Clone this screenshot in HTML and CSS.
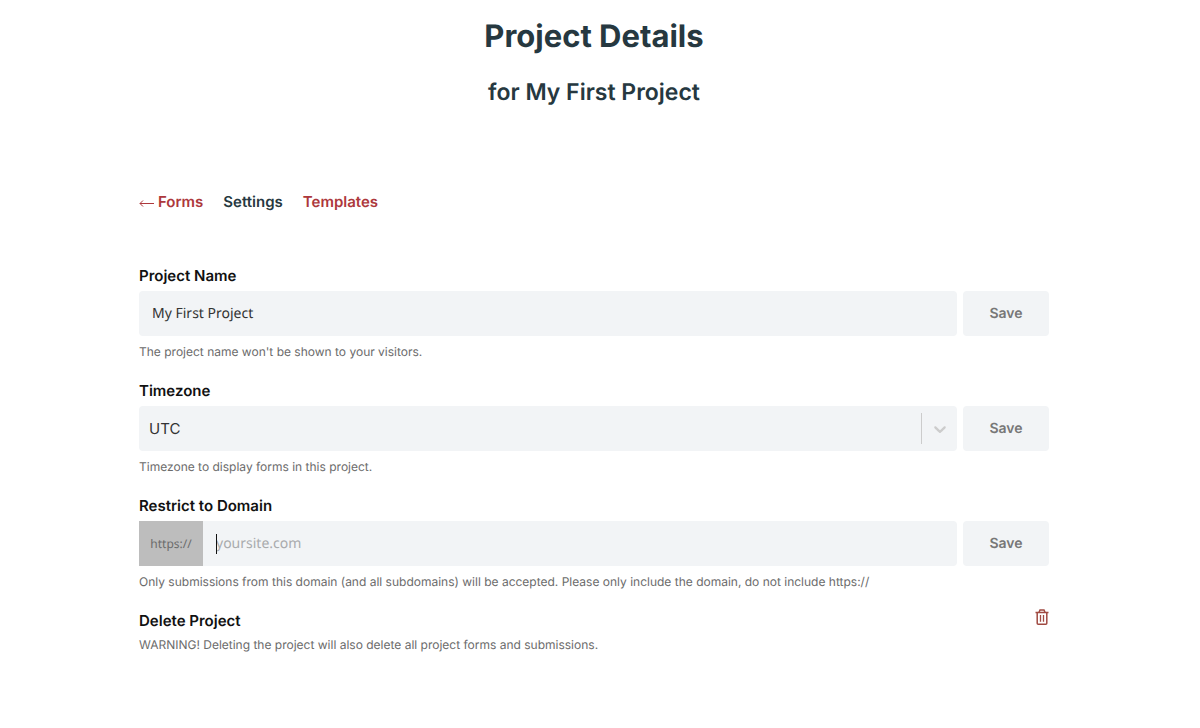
FILE: index.html
```
<!DOCTYPE html>
<html lang="en">
<head>
  <meta charset="UTF-8">
  <meta name="viewport" content="width=device-width, initial-scale=1">
  <title>Project Details</title>
  <link rel="stylesheet" href="styles.css">
</head>
<body>

  <header class="page-header">
    <h1>Project Details</h1>
    <h2>for My First Project</h2>
  </header>

  <main class="container">
    <nav class="tabs">
      <a href="#forms"><svg class="arrow" viewBox="0 0 15 10" fill="none" stroke="currentColor" aria-hidden="true"><path d="M15 5.5H1M4 2.5L1 5.5L4 8.5"/></svg>Forms</a>
      <a href="#settings" class="active">Settings</a>
      <a href="#templates">Templates</a>
    </nav>

    <form class="field">
      <label for="project-name">Project Name</label>
      <div class="row">
        <div class="control">
          <input type="text" id="project-name" value="My First Project">
        </div>
        <button type="submit" class="save">Save</button>
      </div>
      <p class="help">The project name won't be shown to your visitors.</p>
    </form>

    <form class="field">
      <label for="timezone">Timezone</label>
      <div class="row">
        <div class="control">
          <select id="timezone">
            <option>UTC</option>
          </select>
          <span class="indicator">
            <svg viewBox="0 0 20 20" fill="currentColor" aria-hidden="true"><path d="M4.516 7.548c0.436-0.446 1.043-0.481 1.576 0l3.908 3.747 3.908-3.747c0.533-0.481 1.141-0.446 1.574 0 0.436 0.445 0.408 1.197 0 1.615-0.406 0.418-4.695 4.502-4.695 4.502-0.217 0.223-0.502 0.335-0.787 0.335s-0.57-0.112-0.789-0.335c0 0-4.287-4.084-4.695-4.502s-0.436-1.17 0-1.615z"/></svg>
          </span>
        </div>
        <button type="submit" class="save">Save</button>
      </div>
      <p class="help">Timezone to display forms in this project.</p>
    </form>

    <form class="field">
      <label for="domain">Restrict to Domain</label>
      <div class="row">
        <div class="control">
          <span class="prefix">https://</span>
          <div class="domain">
            <input type="text" id="domain" placeholder="yoursite.com">
            <span class="caret"></span>
          </div>
        </div>
        <button type="submit" class="save">Save</button>
      </div>
      <p class="help">Only submissions from this domain (and all subdomains) will be accepted. Please only include the domain, do not include https://</p>
    </form>

    <section class="delete">
      <div>
        <h3>Delete Project</h3>
        <p class="warning">WARNING! Deleting the project will also delete all project forms and submissions.</p>
      </div>
      <button type="button" class="trash" aria-label="Delete project">
        <svg viewBox="0 0 14 16" fill="none" stroke="currentColor" aria-hidden="true">
          <path stroke-width="1.5" d="M0.5 3.5H13.5M2.2 3.5V14.2Q2.2 15.2 3.2 15.2H10.8Q11.8 15.2 11.8 14.2V3.5M4 3.3L5 1H9L10 3.3"/>
          <path stroke-width="1.3" d="M5.5 6V12.8M8.5 6V12.8"/>
        </svg>
      </button>
    </section>
  </main>

</body>
</html>
```
FILE: styles.css
```
* {
  box-sizing: border-box;
}

body {
  margin: 0;
  padding: 16px 12px 24px 0;
  background-color: #fff;
  color: #111;
  font-family: Inter, sans-serif;
  font-size: 15px;
  text-rendering: geometricPrecision;
}

h1, h2, h3, p {
  margin: 0;
}

.page-header {
  text-align: center;
  color: #263840;
}

h1 {
  font-size: 31px;
  line-height: 42px;
  font-weight: 700;
}

h2 {
  margin-top: 18px;
  font-size: 23px;
  line-height: 32px;
  font-weight: 600;
}

.container {
  max-width: 910px;
  margin: 82px auto 0;
}

.tabs {
  display: flex;
  gap: 20px;
  margin-bottom: 50px;
  line-height: 24px;
  font-weight: 600;
}

.tabs a {
  color: #ad383c;
  text-decoration: none;
}

.tabs .active {
  color: #263840;
}

.arrow {
  width: 15px;
  height: 10px;
  margin-right: 4px;
  vertical-align: -1px;
}

.field {
  margin-bottom: 17px;
}

.field label,
h3 {
  display: block;
  font-size: 15px;
  line-height: 24px;
  font-weight: 600;
}

.row {
  display: flex;
  gap: 6px;
  margin: 3px 0 6px;
}

.control {
  position: relative;
  display: flex;
  flex: 1;
  height: 45px;
  border-radius: 4px;
  background-color: #f2f4f6;
}

.control input,
.control select {
  width: 100%;
  height: 100%;
  padding: 0 13px;
  border: none;
  outline: none;
  background: none;
  color: #333;
  font-family: "Noto Sans", sans-serif;
  font-size: 14px;
  text-rendering: inherit;
}

.control select {
  appearance: none;
  padding: 0 10px;
  font-family: Inter, sans-serif;
  font-size: 15px;
}

.control input::placeholder {
  color: #a9abad;
}

.indicator {
  position: absolute;
  top: 7px;
  right: 0;
  bottom: 7px;
  display: flex;
  align-items: center;
  justify-content: center;
  width: 36px;
  border-left: 1px solid #ccc;
  color: #ccc;
  pointer-events: none;
}

.indicator svg {
  width: 20px;
  height: 20px;
}

.prefix {
  display: flex;
  align-items: center;
  justify-content: center;
  width: 64px;
  background-color: #bdbdbd;
  color: #6b6b6b;
  font-family: "Noto Sans", sans-serif;
  font-size: 12px;
}

.domain {
  position: relative;
  flex: 1;
}

.caret {
  position: absolute;
  top: 13px;
  left: 13px;
  width: 1px;
  height: 20px;
  background-color: #111;
}

.save {
  width: 86px;
  border: none;
  border-radius: 4px;
  background-color: #f2f4f6;
  color: #777;
  font-family: inherit;
  font-size: 14px;
  font-weight: 600;
  text-rendering: inherit;
  cursor: pointer;
}

.help,
.warning {
  color: #6b6b6b;
  font-size: 12px;
  line-height: 20px;
}

.delete {
  display: flex;
  justify-content: space-between;
  align-items: flex-start;
}

.warning {
  margin-top: 2px;
}

.trash {
  display: flex;
  padding: 0;
  border: none;
  background: none;
  color: #a04a42;
  cursor: pointer;
}

.trash svg {
  width: 14px;
  height: 16px;
}
```
